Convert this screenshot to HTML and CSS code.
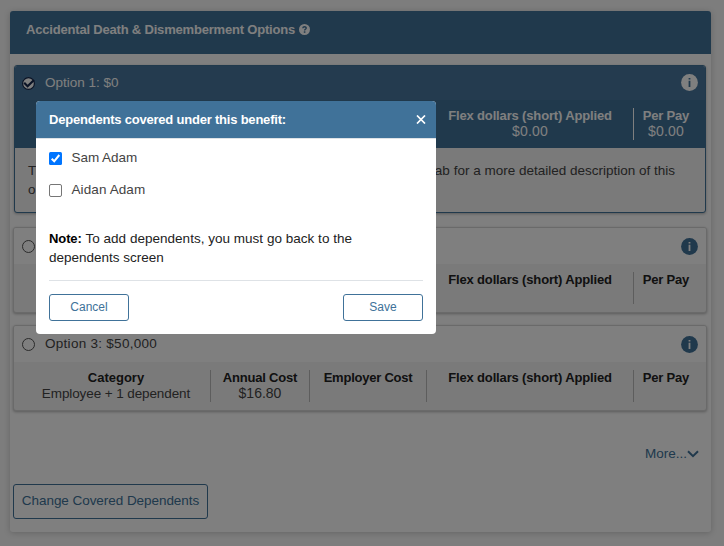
FILE: index.html
```html
<!DOCTYPE html>
<html lang="en">
<head>
<meta charset="utf-8">
<title>Accidental Death &amp; Dismemberment Options</title>
<link rel="stylesheet" href="styles.css">
</head>
<body>
<svg width="0" height="0" class="defs">
  <symbol id="info" viewBox="0 0 17 17"><circle class="disc" cx="8.5" cy="8.5" r="8.4"/><path class="mark" d="M7.6 4h1.8v1.6H7.6zM7.6 6.7h1.8v6.3H7.6z"/></symbol>
</svg>
<main class="panel">
  <header class="panel-head"><h1>Accidental Death &amp; Dismemberment Options</h1>
    <svg class="help" viewBox="0 0 11 11"><circle cx="5.5" cy="5.5" r="5.5" fill="#fff"/><path d="M3.8 4.3C3.9 2.2 7.3 2.3 7.2 4.2C7.1 5.3 5.6 5.2 5.6 6.4" fill="none" stroke="#407299" stroke-width="1.4"/><path d="M4.8 7.3h1.6v1.5H4.8z" fill="#407299"/></svg>
  </header>
  <section class="card selected">
    <div class="card-head"><svg class="radio" viewBox="0 0 13 13"><circle cx="6.5" cy="6.5" r="5.9" fill="#fff" stroke="#14254a" stroke-width="1.2"/><path d="M2.2 5.8L5.6 9.2L12 3" fill="none" stroke="#14254a" stroke-width="2.2"/></svg><span class="t-opt1">Option 1: $0</span><svg class="info"><use href="#info"/></svg></div>
    <div class="costs">
      <div></div>
      <div></div>
      <div></div>
      <div><b class="t-flex">Flex dollars (short) Applied</b><span class="t-amt">$0.00</span></div>
      <div><b class="t-per">Per Pay</b><span class="t-amt">$0.00</span></div>
    </div>
    <div class="description"><div class="line"><span>T</span><span class="t-desc">ab for a more detailed description of this</span></div><div class="line">o</div></div>
  </section>
  <section class="card">
    <div class="card-head"><i class="radio ring"></i><svg class="info"><use href="#info"/></svg></div>
    <div class="costs">
      <div></div>
      <div></div>
      <div></div>
      <div><b class="t-flex">Flex dollars (short) Applied</b></div>
      <div><b class="t-per">Per Pay</b></div>
    </div>
  </section>
  <section class="card">
    <div class="card-head"><i class="radio ring"></i><span class="t-opt3">Option 3: $50,000</span><svg class="info"><use href="#info"/></svg></div>
    <div class="costs">
      <div><b class="t-cat">Category</b><span class="t-empl">Employee + 1 dependent</span></div>
      <div><b class="t-ann">Annual Cost</b><span>$16.80</span></div>
      <div><b class="t-emp">Employer Cost</b></div>
      <div><b class="t-flex">Flex dollars (short) Applied</b></div>
      <div><b class="t-per">Per Pay</b></div>
    </div>
  </section>
  <div class="more"><span class="t-more">More...</span><svg width="12" height="8" viewBox="0 0 12 8"><path d="M1 1.2L6 6.2L11 1.2" fill="none" stroke="#407299" stroke-width="2"/></svg></div>
  <button class="change"><span class="t-change">Change Covered Dependents</span></button>
</main>
<div class="backdrop">
  <div class="modal">
    <header class="modal-head"><h2>Dependents covered under this benefit:</h2><svg width="10" height="9" viewBox="0 0 10 9"><path d="M1 .5L9 8.5M9 .5L1 8.5" stroke="#fff" stroke-width="1.7"/></svg></header>
    <div class="modal-body">
      <label class="check"><svg width="13" height="13" viewBox="0 0 13 13"><rect width="13" height="13" rx="1.5" fill="#0075ff"/><path d="M2.7 6.8L5.2 9.3L10.3 3" fill="none" stroke="#fff" stroke-width="2"/></svg><span class="t-sam">Sam Adam</span></label>
      <label class="check"><i class="box"></i><span class="t-aidan">Aidan Adam</span></label>
      <p class="note"><b>Note:</b> <span class="t-note1">To add dependents, you must go back to the</span><br><span class="t-note2">dependents screen</span></p>
      <footer class="actions"><button><span>Cancel</span></button><button><span>Save</span></button></footer>
    </div>
  </div>
</div>
</body>
</html>
```
FILE: styles.css
```css
* { box-sizing: border-box; }
body { margin: 0; height: 546px; overflow: hidden; padding: 11px 13px 0 10px; background: #fafafa; font: 13.5px/16px "Liberation Sans", Arial, sans-serif; color: #444; }
h1, h2, p { margin: 0; }
span, b, h1, h2 { white-space: nowrap; }
.defs { position: absolute; }
.panel { height: 521px; background: #fff; border-radius: 3px; box-shadow: 0 1px 6px rgba(0,0,0,.2); display: flex; flex-direction: column; }
.panel-head { height: 43px; flex: none; display: flex; align-items: center; gap: 4px; padding: 0 16px 6px; background: #407299; color: #fff; border-radius: 3px 3px 0 0; }
h1 { font-size: 13px; letter-spacing: -.19px; }
.help { width: 11px; height: 11px; }
.card { height: 86px; margin: 0 4px 12px 3px; border: 1px solid #d4d4d4; border-radius: 3px; background: #f4f4f4; box-shadow: 0 1px 3px rgba(0,0,0,.3); overflow: hidden; flex: none; }
.card.selected { height: 148px; margin: 11px 5px 14px 4px; border-color: #407299; }
.card-head { height: 36px; padding: 0 8px; display: flex; align-items: center; background: #fff; }
.card-head span { padding-bottom: 1px; }
.selected .card-head { height: 34px; padding: 0 7px; background: #48779e; color: #fff; }
.selected .card-head span { padding-bottom: 0; }
.radio { width: 13px; height: 13px; margin-right: 10px; flex: none; }
.ring { border: 1px solid #555; border-radius: 50%; }
.info { width: 17px; height: 17px; margin-left: auto; --disc: #407299; --mark: #fff; }
.selected .info { --disc: #fff; --mark: #407299; margin-bottom: 2px; }
.disc { fill: var(--disc); }
.mark { fill: var(--mark); }
.costs { display: grid; grid-template-columns: 189px 99px 117px 207px 64px; padding: 8px 8px 0; height: 48px; }
.costs div { height: 32px; display: flex; flex-direction: column; align-items: center; border-right: 1px solid #bbb; }
.costs div:last-child { border: 0; }
.costs b { font-size: 13px; color: #222; }
.costs span { font-size: 14px; line-height: 15px; }
.selected .costs { background: #407299; color: #fff; padding-left: 7px; padding-right: 7px; }
.selected .costs b { color: #fff; }
.selected .costs div { border-color: #fff; }
.selected .costs div:last-child { border: 0; }
.description { padding: 13px 30px 0 13px; line-height: 19px; }
.line { display: flex; justify-content: space-between; }
.more { margin: 23px 12px 0; height: 16px; display: flex; justify-content: flex-end; align-items: center; color: #407299; }
button { font: inherit; background: #fff; color: #407299; border: 1px solid #407299; border-radius: 3px; padding: 0 0 2px; }
.change { width: 195px; height: 35px; margin: 22px 0 0 3px; }
.backdrop { position: absolute; inset: 0; background: rgba(0,0,0,.5); padding: 101px 0 0 36px; }
.modal { width: 400px; height: 233px; background: #fff; border-radius: 4px; overflow: hidden; }
.modal-head { height: 38px; background: #407299; color: #fff; border-bottom: 1px solid #dee2e6; display: flex; align-items: center; justify-content: space-between; padding: 0 10px 0 13px; }
h2 { font-size: 13px; letter-spacing: -.21px; }
.modal-body { padding: 11px 13px 0; }
.check { display: flex; align-items: center; gap: 9.5px; height: 16px; margin-bottom: 16px; }
.check span { padding-bottom: 0; }
.box { width: 13px; height: 13px; border: 1px solid #767676; border-radius: 2px; }
.note { padding-top: 15px; line-height: 19px; color: #222; height: 67px; border-bottom: 1px solid #dee2e6; }
.note b { color: #000; font-size: 13px; letter-spacing: -.1px; }
.t-note1 { letter-spacing: .02px; }
.actions { display: flex; justify-content: space-between; padding-top: 13px; }
.actions button { width: 80px; height: 27px; font-size: 12px; }
.t-opt3 { letter-spacing: .28px; }
.costs .t-empl { font-size: 13.5px; letter-spacing: -.1px; }
.t-ann, .t-per { letter-spacing: -.2px; }
.t-emp { letter-spacing: -.24px; }
.t-flex { letter-spacing: -.15px; }
.t-amt { letter-spacing: .2px; }
.t-sam { letter-spacing: -.05px; }
.t-aidan { letter-spacing: .1px; }
.t-change { letter-spacing: -.05px; }
```
